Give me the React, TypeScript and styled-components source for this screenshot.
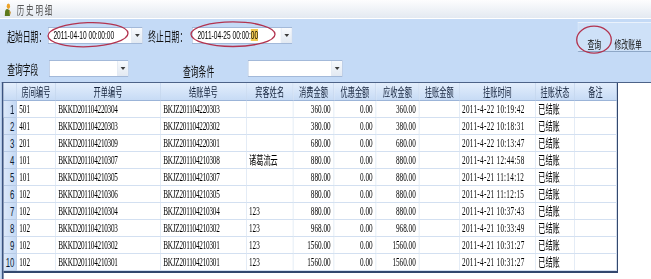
import styled, { createGlobalStyle } from "styled-components";

// the whole form is laid out wide and squeezed horizontally, like the screenshot
const SCALE = 0.6;
const STAGE_WIDTH = 1085;

type Align = "left" | "right";

type Column = {
  title: string;
  width: number;
  align: Align;
  spacing?: number;
};

const ROWNUM_WIDTH = 22;

const COLUMNS: Column[] = [
  { title: "房间编号", width: 65, align: "left" },
  { title: "开单编号", width: 175, align: "left", spacing: -0.4 },
  { title: "结账单号", width: 143, align: "left", spacing: -0.4 },
  { title: "宾客姓名", width: 78, align: "left" },
  { title: "消费金额", width: 68, align: "right" },
  { title: "优惠金额", width: 70, align: "right" },
  { title: "应收金额", width: 72, align: "right" },
  { title: "挂账金额", width: 67, align: "right" },
  { title: "挂账时间", width: 127, align: "left", spacing: 0.5 },
  { title: "挂账状态", width: 65, align: "left" },
  { title: "备注", width: 70, align: "left" },
];

const ROWS: string[][] = [
  ["501", "BKKD201104220304", "BKJZ201104220303", "", "360.00", "0.00", "360.00", "", "2011-4-22 10:19:42", "已结账", ""],
  ["401", "BKKD201104220303", "BKJZ201104220302", "", "380.00", "0.00", "380.00", "", "2011-4-22 10:18:31", "已结账", ""],
  ["201", "BKKD201104210309", "BKJZ201104220301", "", "680.00", "0.00", "680.00", "", "2011-4-22 10:13:47", "已结账", ""],
  ["101", "BKKD201104210307", "BKJZ201104210308", "诸葛流云", "880.00", "0.00", "880.00", "", "2011-4-21 12:44:58", "已结账", ""],
  ["101", "BKKD201104210305", "BKJZ201104210307", "", "880.00", "0.00", "880.00", "", "2011-4-21 11:14:12", "已结账", ""],
  ["102", "BKKD201104210306", "BKJZ201104210305", "", "880.00", "0.00", "880.00", "", "2011-4-21 11:12:15", "已结账", ""],
  ["102", "BKKD201104210304", "BKJZ201104210304", "123", "880.00", "0.00", "880.00", "", "2011-4-21 10:37:43", "已结账", ""],
  ["102", "BKKD201104210303", "BKJZ201104210302", "123", "968.00", "0.00", "968.00", "", "2011-4-21 10:33:49", "已结账", ""],
  ["102", "BKKD201104210302", "BKJZ201104210301", "123", "1560.00", "0.00", "1560.00", "", "2011-4-21 10:31:27", "已结账", ""],
  ["102", "BKKD201104210301", "BKJZ201104210301", "123", "1560.00", "0.00", "1560.00", "", "2011-4-21 10:31:27", "已结账", ""],
];

const GlobalStyle = createGlobalStyle`
  html, body {
    margin: 0;
    padding: 0;
    background: #c4daf6;
    overflow: hidden;
  }
`;

const Root = styled.div`
  position: relative;
  width: 651px;
  height: 279px;
  overflow: hidden;
  background: #c4daf6;
`;

const Stage = styled.div`
  width: ${STAGE_WIDTH}px;
  height: 279px;
  transform: scaleX(${SCALE});
  transform-origin: 0 0;
  display: flex;
  flex-direction: column;
  font-family: "Noto Sans CJK SC", sans-serif;
`;

const TitleBar = styled.div`
  flex: none;
  height: 19px;
  box-sizing: border-box;
  display: flex;
  align-items: center;
  gap: 9px;
  padding-left: 6px;
  background: linear-gradient(#fdfdfe, #e3e9f1);
  border-bottom: 1px solid #ffffff;
  color: #555;
  font-size: 12.5px;
  letter-spacing: 3px;
`;

const Panel = styled.div`
  flex: 1;
  min-height: 0;
  display: flex;
  flex-direction: column;
`;

const TopArea = styled.div`
  flex: none;
  height: 63px;
  display: flex;
  justify-content: space-between;
  align-items: flex-start;
`;

const Filters = styled.div`
  display: flex;
  flex-direction: column;
  gap: 16px;
  padding: 8px 0 0 12px;
`;

const FilterRow = styled.div`
  display: flex;
  align-items: center;
  height: 17px;
`;

const Label = styled.span<{ $width: number; $gap?: number; $drop?: number }>`
  width: ${(p) => p.$width}px;
  margin-left: ${(p) => p.$gap ?? 0}px;
  position: relative;
  top: ${(p) => p.$drop ?? 0}px;
  font-size: 13px;
  color: #111;
  white-space: nowrap;
`;

const Field = styled.div<{ $width: number }>`
  width: ${(p) => p.$width}px;
  height: 17px;
  box-sizing: border-box;
  display: flex;
  align-items: stretch;
  background: #fff;
  border: 1px solid #a3b9d9;
  font-family: "Liberation Sans", sans-serif;
  font-size: 11px;
  color: #000;
`;

const FieldText = styled.span`
  flex: 1;
  padding-left: 8px;
  line-height: 15px;
  white-space: nowrap;
`;

const Selected = styled.span`
  background: #f2cb52;
`;

const DropButton = styled.span`
  width: 17px;
  display: flex;
  align-items: center;
  justify-content: center;
  border-left: 1px solid #d8e2ef;
  background: linear-gradient(#f8fafd, #e2e9f2);

  &::after {
    content: "";
    border-left: 4px solid transparent;
    border-right: 4px solid transparent;
    border-top: 3px solid #3d3d3d;
  }
`;

const Toolbar = styled.div`
  margin-top: 3px;
  width: 122px;
  height: 30px;
  box-sizing: border-box;
  display: flex;
  align-items: flex-start;
  padding: 13px 0 0 4px;
  background: #cee1f8;
  border-top: 1px solid #eaf2fc;
  border-left: 1px solid #dce9fa;
  border-bottom: 1px solid #8ea7c7;
`;

const ToolButton = styled.span`
  padding: 0 11px;
  font-size: 11.5px;
  line-height: 16px;
  color: #111;
  white-space: nowrap;
`;

const Grid = styled.div`
  flex: 1;
  min-height: 0;
  margin-left: 3px;
  background: #fff;
  border-left: 3px solid #3a5380;
  border-top: 1px solid #4d6388;
`;

const Sheet = styled.div`
  display: grid;
  grid-template-columns: ${[ROWNUM_WIDTH, ...COLUMNS.map((c) => c.width)].map((w) => `${w}px`).join(" ")};
  grid-template-rows: 18px repeat(${ROWS.length}, 17px);
  width: max-content;
  border-right: 2px solid #33486e;
  border-bottom: 2px solid #33486e;
`;

const HeadCell = styled.div`
  box-sizing: border-box;
  display: flex;
  align-items: center;
  justify-content: center;
  background: linear-gradient(#e3eefc, #c7dbf5);
  border-right: 1px solid #a5bfe2;
  border-bottom: 1px solid #9bb4d8;
  font-size: 12px;
  color: #13213a;
  white-space: nowrap;
`;

const RowNumber = styled.div`
  box-sizing: border-box;
  display: flex;
  align-items: center;
  justify-content: flex-end;
  padding-right: 3px;
  background: linear-gradient(to right, #dce9fa, #c5d9f4);
  border-right: 1px solid #9bb4d8;
  border-bottom: 1px solid #b7cbe6;
  font-family: "Liberation Sans", sans-serif;
  font-size: 13px;
  color: #0b1a33;
`;

const Cell = styled.div<{ $align: Align; $spacing?: number }>`
  box-sizing: border-box;
  display: flex;
  align-items: center;
  justify-content: ${(p) => (p.$align === "right" ? "flex-end" : "flex-start")};
  padding: 0 ${(p) => (p.$align === "right" ? "5px" : "0")} 0 ${(p) => (p.$align === "left" ? "4px" : "0")};
  border-right: 1px solid #d3e0f1;
  border-bottom: 1px solid #d3e0f1;
  font-family: "Liberation Serif", "Noto Sans CJK SC", serif;
  font-size: 12px;
  letter-spacing: ${(p) => p.$spacing ?? 0}px;
  color: #000;
  white-space: nowrap;
  overflow: hidden;
`;

const Marks = styled.svg`
  position: absolute;
  left: 0;
  top: 0;
  pointer-events: none;
`;

const PersonIcon = () => (
  <svg width="13" height="13" viewBox="0 0 13 13">
    <circle cx="8" cy="3.2" r="2.8" fill="#eea328" />
    <path d="M2 13 L2.5 8 Q4 5.5 7 6.2 L10 7 L10.5 13 Z" fill="#5d7a1c" />
    <path d="M9 7 L12 9 L11 12 Z" fill="#c98a23" />
  </svg>
);

const App = () => {
  return (
    <Root>
      <GlobalStyle />
      <Stage>
        <TitleBar>
          <PersonIcon />
          历史明细
        </TitleBar>
        <Panel>
          <TopArea>
            <Filters>
              <FilterRow>
                <Label $width={68}>起始日期：</Label>
                <Field $width={158}>
                  <FieldText>2011-04-10 00:00:00</FieldText>
                  <DropButton />
                </Field>
                <Label $width={73} $gap={9}>
                  终止日期：
                </Label>
                <Field $width={167}>
                  <FieldText>
                    2011-04-25 00:00:<Selected>00</Selected>
                  </FieldText>
                  <DropButton />
                </Field>
              </FilterRow>
              <FilterRow>
                <Label $width={70}>查询字段</Label>
                <Field $width={132}>
                  <FieldText />
                  <DropButton />
                </Field>
                <Label $width={108} $gap={91} $drop={2}>
                  查询条件
                </Label>
                <Field $width={158}>
                  <FieldText />
                  <DropButton />
                </Field>
              </FilterRow>
            </Filters>
            <Toolbar>
              <ToolButton>查询</ToolButton>
              <ToolButton>修改账单</ToolButton>
            </Toolbar>
          </TopArea>
          <Grid>
            <Sheet>
              <HeadCell />
              {COLUMNS.map((c) => (
                <HeadCell key={c.title}>{c.title}</HeadCell>
              ))}
              {ROWS.map((row, i) => [
                <RowNumber key={`n${i}`}>{i + 1}</RowNumber>,
                ...row.map((value, j) => (
                  <Cell key={`${i}-${j}`} $align={COLUMNS[j].align} $spacing={COLUMNS[j].spacing}>
                    {value}
                  </Cell>
                )),
              ])}
            </Sheet>
          </Grid>
        </Panel>
      </Stage>
      <Marks width="651" height="279" viewBox="0 0 651 279">
        <g fill="none" stroke="#b2334f" strokeWidth="1.3">
          <ellipse cx="88" cy="34.7" rx="40" ry="12" transform="rotate(-2 88 34.7)" />
          <ellipse cx="233" cy="34.2" rx="42" ry="12.3" />
          <ellipse cx="594" cy="39.7" rx="17.3" ry="13.5" />
        </g>
      </Marks>
    </Root>
  );
};

export default App;
